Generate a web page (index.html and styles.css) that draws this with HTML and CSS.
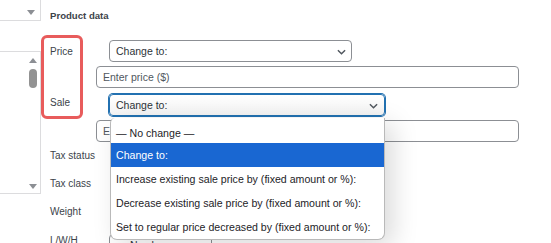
FILE: index.html
```html
<!DOCTYPE html>
<html>
<head>
<meta charset="utf-8">
<link rel="stylesheet" href="styles.css">
</head>
<body>
<div class="page">
  <aside class="sidebar">
    <div class="side-select"><span class="tri-down"></span></div>
    <div class="side-list">
      <div class="scrollbar">
        <span class="tri-up"></span>
        <span class="thumb"></span>
        <span class="spacer"></span>
        <span class="tri-down"></span>
      </div>
    </div>
  </aside>
  <main class="main">
    <div class="heading">Product data</div>
    <div class="grid">
      <div class="label">Price</div>
      <div class="select select-price">Change to:<svg class="chev" viewBox="0 0 10 6"><path d="M1 1l4 4 4-4"/></svg></div>
      <div class="input">Enter price ($)</div>

      <div class="label">Sale</div>
      <div class="select select-sale focus">Change to:<svg class="chev" viewBox="0 0 10 6"><path d="M1 1l4 4 4-4"/></svg></div>
      <div class="input input-2">Enter price ($)</div>

      <div class="label plain">Tax status</div>
      <div class="label plain">Tax class</div>
      <div class="label plain">Weight</div>
      <div class="label plain lwh">L/W/H</div>
      <div class="select select-small">No change</div>
    </div>
  </main>
  <div class="annot"></div>
  <ul class="dropdown">
    <li>— No change —</li>
    <li class="sel">Change to:</li>
    <li>Increase existing sale price by (fixed amount or %):</li>
    <li>Decrease existing sale price by (fixed amount or %):</li>
    <li>Set to regular price decreased by (fixed amount or %):</li>
  </ul>
</div>
</body>
</html>
```
FILE: styles.css
```css
* { box-sizing: border-box; }
html, body { margin: 0; padding: 0; background: #fff; }
body {
  font-family: "Liberation Sans", Arial, sans-serif;
  color: #3c434a;
  width: 551px;
  height: 243px;
  overflow: hidden;
}
.page {
  position: relative;
  display: flex;
  width: 551px;
  height: 243px;
  overflow: hidden;
}
.sidebar {
  width: 41px;
  flex: none;
  display: flex;
  flex-direction: column;
}
.side-select {
  height: 21px;
  border-right: 1px solid #dcdcde;
  border-bottom: 1px solid #dcdcde;
  display: flex;
  justify-content: flex-end;
  align-items: center;
  padding: 4px 5px 0 0;
}
.tri-down, .tri-up {
  width: 0; height: 0;
  border-left: 4px solid transparent;
  border-right: 4px solid transparent;
}
.tri-down { border-top: 5px solid #8c8f94; }
.tri-up { border-bottom: 5px solid #8c8f94; }
.side-list {
  margin-top: 30px;
  height: 143px;
  border-top: 1px solid #dcdcde;
  border-right: 1px solid #dcdcde;
  border-bottom: 1px solid #dcdcde;
  display: flex;
  justify-content: flex-end;
}
.scrollbar {
  width: 14px;
  display: flex;
  flex-direction: column;
  align-items: center;
  padding: 6px 0 4px;
  margin-right: 0;
}
.thumb {
  width: 8px;
  height: 19px;
  border-radius: 4px;
  background: #929292;
  margin-top: 6px;
}
.spacer { flex: 1; }

.main {
  flex: 1;
  padding: 0 32px 0 9px;
}
.heading {
  height: 40px;
  line-height: 32px;
  font-size: 9.6px;
  font-weight: 700;
  color: #3c434a;
}
.grid {
  display: grid;
  grid-template-columns: 46px 13px 1fr;
  align-items: center;
}
.label {
  grid-column: 1;
  font-size: 10px;
  color: #3c434a;
}
.select, .input {
  font-size: 10.5px;
  color: #2c3338;
  border: 1px solid #8c8f94;
  border-radius: 4px;
  height: 22px;
  display: flex;
  align-items: center;
  padding-left: 6px;
  background: #fff;
}
.select { grid-column: 3; position: relative; }
.select .chev {
  position: absolute;
  width: 9px;
  height: 6px;
  top: 8px;
  fill: none;
  stroke: #50575e;
  stroke-width: 1.6;
}
.select-price { width: 243px; }
.select-price .chev { right: 5px; }
.select-sale { width: 276px; margin: 6px 0 1px; }
.select-sale .chev { right: 6px; }
.focus {
  border-color: #2271b1;
  box-shadow: 0 0 0 1px #2271b1;
  background: linear-gradient(#ffffff, #f4f4f4);
}
.input {
  grid-column: 2 / 4;
  color: #50575e;
  margin-top: 4px;
}
.input-2 { margin-top: 3px; }
.plain { height: 28px; line-height: 28px; }
.grid > .label:nth-of-type(1) { grid-row: 1; }
.lwh { grid-row: 10; }
.select-small {
  grid-row: 10;
  width: 103px;
  height: 22px;
  align-self: start;
  margin-top: 8px;
  padding-left: 20px;
  border-color: #8c8f94;
}

.annot {
  position: absolute;
  left: 41px;
  top: 35px;
  width: 42px;
  height: 84px;
  border: 3px solid #e85c5c;
  border-radius: 6px;
}
.dropdown {
  position: absolute;
  left: 110px;
  top: 118px;
  width: 275px;
  margin: 0;
  padding: 2px 0 0;
  list-style: none;
  background: #fff;
  border: 1px solid #b9b9b9;
  border-top: none;
  border-radius: 5px 0 7px 7px;
  box-shadow: 8px 6px 26px rgba(0, 0, 0, 0.15);
  font-size: 10.6px;
  color: #1d2327;
}
.dropdown li {
  height: 24px;
  line-height: 24px;
  padding-left: 5px;
  white-space: nowrap;
}
.dropdown li:first-child { height: 23px; line-height: 26px; }
.dropdown li.sel {
  background: #1967d2;
  color: #fff;
}
```
